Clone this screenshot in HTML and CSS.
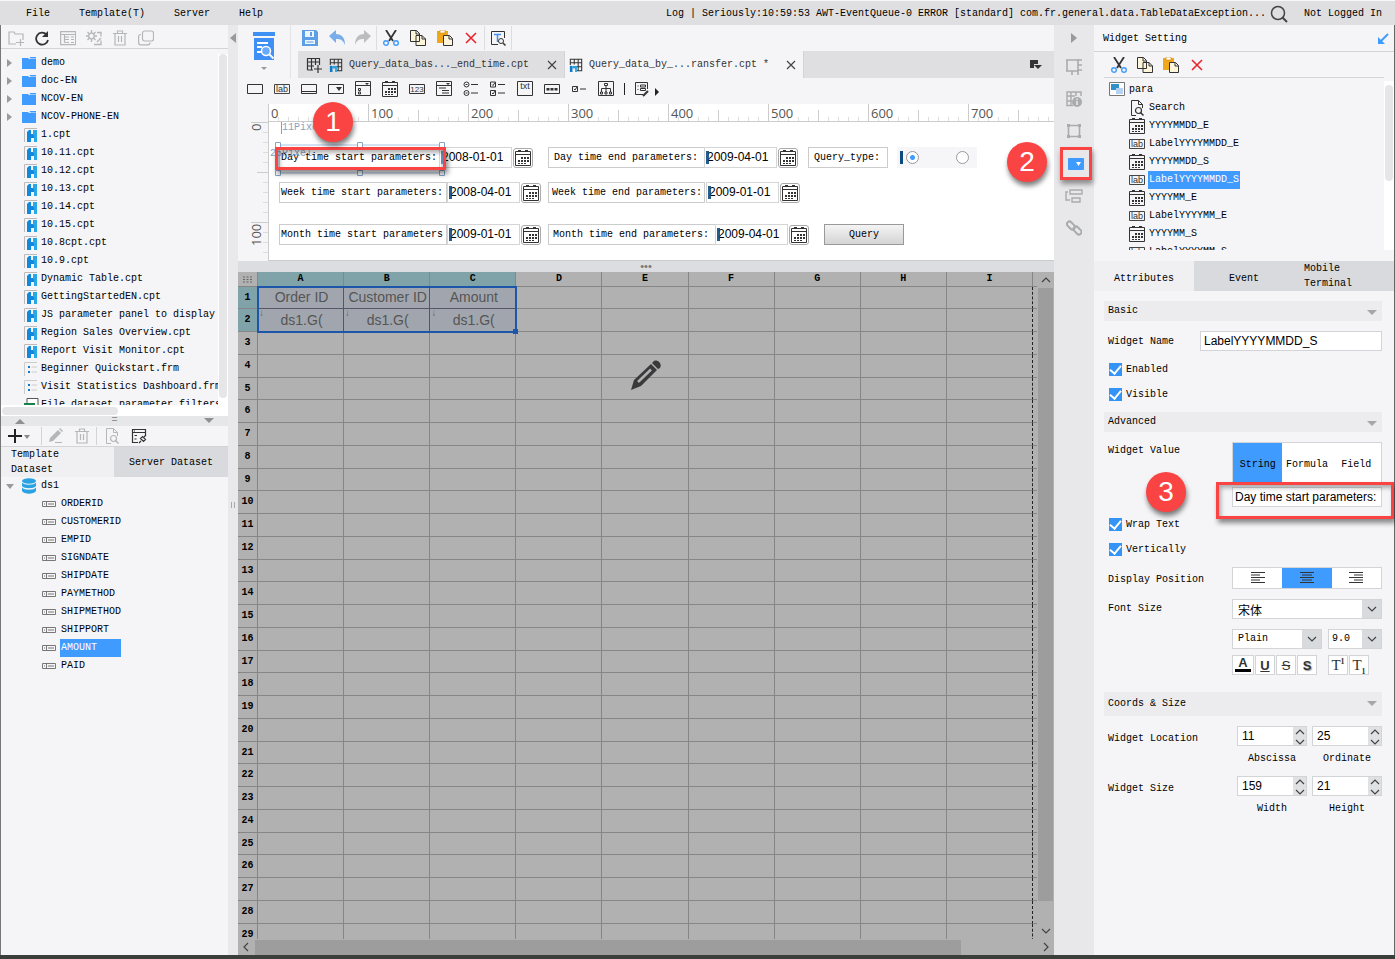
FILE: index.html
```html
<!DOCTYPE html>
<html lang="en">
<head>
<meta charset="utf-8">
<title>Report Designer</title>
<link rel="stylesheet" href="styles.css">
</head>
<body>
<svg class="sprite" aria-hidden="true">
  <symbol id="calendar" viewBox="0 0 16 16"><path d="M.5 1.5h15v14H.5zM.5 4.500h15" fill="none" stroke="#333"/><path d="M3 0h3v2H3zM10 0h3v2h-3z" fill="#333"/><path d="M6 7h2v2H6zM9 7h2v2H9zM12 7h2v2h-2zM3 10h2v2H3zM6 10h2v2H6zM9 10h2v2H9zM12 10h2v2h-2zM3 13h2v1H3zM6 13h2v1H6zM9 13h2v1H9z" fill="#333"/></symbol>
  <symbol id="label" viewBox="0 0 16 16"><path d="M.5 3.500h15v9H.5z" fill="none" stroke="#444"/><text x="8" y="11" font-size="9" text-anchor="middle" font-family="Liberation Sans" fill="#333">lab</text></symbol>
  <symbol id="cut" viewBox="0 0 16 16"><path d="M3 0l7 11M13 0L6 11" stroke="#333" stroke-width="1.800" fill="none"/><circle cx="3" cy="13" r="2.300" fill="none" stroke="#3f9bfd" stroke-width="1.400"/><circle cx="13" cy="13" r="2.300" fill="none" stroke="#3f9bfd" stroke-width="1.400"/></symbol>
  <symbol id="copy" viewBox="0 0 16 16"><path d="M.5.5h6l3 3v8h-9zM6 .5v3.500h3.500M6 5.500h6l3.500 3.500v6.500H6zM12 5.500v3.500h3.500" fill="#fdf6da" stroke="#333"/></symbol>
  <symbol id="paste" viewBox="0 0 16 16"><path d="M0 1h11v12H0z" fill="#f0a81a"/><path d="M3 0h5v3H3z" fill="#fff" stroke="#c98200" stroke-width=".6"/><path d="M6.500 5.500h6l3 3v7h-9zM12 5.500v3.500h3.500" fill="#fdf6da" stroke="#333"/></symbol>
  <symbol id="cross" viewBox="0 0 16 16"><path d="M3 3l10 10M13 3L3 13" stroke="#e8252b" stroke-width="1.600"/></symbol>
  <symbol id="close" viewBox="0 0 16 16"><path d="M4 4l8 8M12 4l-8 8" stroke="#444" stroke-width="1.200"/></symbol>
  <symbol id="folder" viewBox="0 0 16 14"><path d="M1 2h6l1 1h7v10H1z" fill="#3f9bfd"/><path d="M8.500 1H15v1.500H9.500z" fill="#3f9bfd"/></symbol>
  <symbol id="cpt" viewBox="0 0 14 16"><path d="M.5 15V1.500H13" fill="none" stroke="#bbb"/><path d="M3 5l2-2h8v12h-3v-4H7v4H3z" fill="#1288dd"/><path d="M9 3h4v12h-3V8H9z" fill="#28a9e6"/><path d="M7 3h2v4H7z" fill="#f5f5f7"/></symbol>
  <symbol id="frm" viewBox="0 0 14 16"><path d="M.5 15V1.500H13" fill="none" stroke="#ccc"/><path d="M4 5h2v2H4zM4 10h2v2H4z" fill="#1278c8"/><path d="M7.500 6H13M7.500 11H13" stroke="#ccc"/></symbol>
  <symbol id="xls" viewBox="0 0 16 16"><path d="M4 6V1.500h11V15" fill="#fff" stroke="#555"/><path d="M1 6h11v10H1z" fill="#15824b"/><path d="M4 9l5 6M9 9l-5 6" stroke="#fff" stroke-width="1.500"/></symbol>
  <symbol id="field" viewBox="0 0 16 8"><path d="M1.500 1.500h13v5h-13zM5.500 1.500v5M7 4h6M3 4h1" fill="none" stroke="#777"/></symbol>
  <symbol id="db" viewBox="0 0 16 16"><ellipse cx="8" cy="3" rx="7" ry="2.800" fill="#2ba3e3"/><path d="M1 4.500c2 3 12 3 14 0v3.500c-2 3-12 3-14 0zM1 9.500c2 3 12 3 14 0v3.500c-2 3.500-12 3.500-14 0z" fill="#2ba3e3"/></symbol>
  <symbol id="trash" viewBox="0 0 16 16"><path d="M1 3.500h14M5.500 3V1h5v2M3 3.500V15h10V3.500M6.500 6v6M9.500 6v6" fill="none" stroke="#b5b6b9" stroke-width="1.200"/></symbol>
  <symbol id="docfind" viewBox="0 0 16 16"><path d="M7 15.500H2.500V.5h7l4 4V8M9.500.5v4h4" fill="none" stroke="currentColor"/><circle cx="9.500" cy="10.500" r="3" fill="none" stroke="currentColor" stroke-width="1.200"/><path d="M11.500 12.500l3 3" stroke="currentColor" stroke-width="1.500"/></symbol>
  <symbol id="report" viewBox="0 0 16 16"><path d="M1.500 8V1.500h13v13H9M1.500 5.500h13M6 1.500v6M10.500 1.500v13M8 10h6" fill="none" stroke="#333" stroke-width="1.200"/><path d="M1 9h3v7H1z" fill="#1278c8"/><path d="M4 9h5v7H7v-4H4z" fill="#28a0e0"/></symbol>
  <symbol id="chevron" viewBox="0 0 10 10"><path d="M1 3l4 4 4-4" fill="none" stroke="#444" stroke-width="1.200"/></symbol>
  <symbol id="caret" viewBox="0 0 10 6"><path d="M0 0h10L5 5z" fill="currentColor"/></symbol>
</svg>

<header class="menubar">
  <nav class="menus"><button>File</button><button>Template(T)</button><button>Server</button><button>Help</button></nav>
  <p class="log">Log | Seriously:10:59:53 AWT-EventQueue-0 ERROR [standard] com.fr.general.data.TableDataException...</p>
  <button class="icon-btn" aria-label="Search"><svg width="18" height="18" viewBox="0 0 18 18"><circle cx="8" cy="8" r="6.500" fill="none" stroke="#444" stroke-width="1.500"/><path d="M12.500 12.500l4.500 4.500" stroke="#444" stroke-width="2"/></svg></button>
  <button class="login">Not Logged In</button>
</header>

<div class="app">
  <aside class="left">
    <div class="bar file-bar">
      <button class="tool" aria-label="New folder"><svg width="16" height="16" viewBox="0 0 16 16" fill="none" stroke="#b5b6b9" stroke-width="1.200"><path d="M8 14H1V2h5l1 2h8v6M8 12.500h8M12.500 9v7"/></svg></button>
      <button class="tool" aria-label="Refresh"><svg width="16" height="16" viewBox="0 0 16 16"><path d="M12.500 4.500A6 6 0 1 0 14 10" fill="none" stroke="#333" stroke-width="1.800"/><path d="M14 1v6H8z" fill="#333"/></svg></button>
      <button class="tool" aria-label="Show path"><svg width="16" height="16" viewBox="0 0 16 16" fill="none" stroke="#b5b6b9" stroke-width="1.200"><path d="M.6 1.600h15v13H.6zM.6 4.500h15M4.500 4.500v8M4.500 7H9M4.500 9.500H9M4.500 12.500H9M11 7h3M11 9.500h3M11 12.500h3"/></svg></button>
      <button class="tool" aria-label="Settings"><svg width="16" height="16" viewBox="0 0 16 16" fill="none" stroke="#b5b6b9" stroke-width="1.300"><circle cx="5.500" cy="6" r="2.800"/><path d="M5.500 0v3M5.500 9v3M0 6h2.500M8.500 6H11M1.500 2l2 2M9.500 2l-2 2M1.500 10l2-2M9.500 10l-2-2M11 2.500h4v4M8 14.500h7v-4M11 12l4-4"/></svg></button>
      <button class="tool" aria-label="Delete"><svg width="16" height="16"><use href="#trash"/></svg></button>
      <button class="tool" aria-label="Duplicate"><svg width="16" height="16" viewBox="0 0 16 16" fill="none" stroke="#b5b6b9" stroke-width="1.200"><rect x="4.500" y="1" width="11" height="10" rx="2"/><path d="M3 4.500c-1.500 0-2.400.5-2.400 2v6c0 1.500.5 2.400 2 2.400h7c1.500 0 2.400-.8 2.400-2.400"/></svg></button>
    </div>
    <div class="tree-box files">
      <ul class="tree">
        <li class="dir"><svg><use href="#folder"/></svg>demo</li>
        <li class="dir"><svg><use href="#folder"/></svg>doc-EN</li>
        <li class="dir"><svg><use href="#folder"/></svg>NCOV-EN</li>
        <li class="dir"><svg><use href="#folder"/></svg>NCOV-PHONE-EN</li>
        <li><svg><use href="#cpt"/></svg>1.cpt</li>
        <li><svg><use href="#cpt"/></svg>10.11.cpt</li>
        <li><svg><use href="#cpt"/></svg>10.12.cpt</li>
        <li><svg><use href="#cpt"/></svg>10.13.cpt</li>
        <li><svg><use href="#cpt"/></svg>10.14.cpt</li>
        <li><svg><use href="#cpt"/></svg>10.15.cpt</li>
        <li><svg><use href="#cpt"/></svg>10.8cpt.cpt</li>
        <li><svg><use href="#cpt"/></svg>10.9.cpt</li>
        <li><svg><use href="#cpt"/></svg>Dynamic Table.cpt</li>
        <li><svg><use href="#cpt"/></svg>GettingStartedEN.cpt</li>
        <li><svg><use href="#cpt"/></svg>JS parameter panel to display</li>
        <li><svg><use href="#cpt"/></svg>Region Sales Overview.cpt</li>
        <li><svg><use href="#cpt"/></svg>Report Visit Monitor.cpt</li>
        <li><svg><use href="#frm"/></svg>Beginner Quickstart.frm</li>
        <li><svg><use href="#frm"/></svg>Visit Statistics Dashboard.frm</li>
        <li><svg><use href="#xls"/></svg>File dataset parameter filters</li>
      </ul>
      <div class="vscroll"><i></i></div>
    </div>
    <div class="hscroll"><i></i></div>
    <div class="splitter"><svg class="up" width="10" height="6"><use href="#caret"/></svg><span>=</span><svg width="10" height="6"><use href="#caret"/></svg></div>
    <div class="bar data-bar">
      <button class="tool add" aria-label="Add"><svg width="22" height="14" viewBox="0 0 22 14"><path d="M7 0v14M0 7h14" stroke="#222" stroke-width="2"/><path d="M16 6h6l-3 4z" fill="#888"/></svg></button>
      <button class="tool sep-l" aria-label="Edit"><svg width="16" height="16" viewBox="0 0 16 16"><path d="M1 14l1-4 8-8 3 3-8 8zM11 1l1-1 3 3-1 1z" fill="#b5b6b9"/><path d="M7 14.500h7" stroke="#b5b6b9"/></svg></button>
      <button class="tool" aria-label="Delete dataset"><svg width="16" height="16"><use href="#trash"/></svg></button>
      <button class="tool sep-l pale" aria-label="Preview"><svg width="16" height="16"><use href="#docfind"/></svg></button>
      <button class="tool" aria-label="Connection"><svg width="16" height="16" viewBox="0 0 16 16" fill="none" stroke="#333" stroke-width="1.200"><path d="M7 14.500H1.500v-13h13V7M1.500 4.500h13M3.500 7.500H6M3.500 11h2M3 3h1"/><path d="M8 15l2-2M9.500 10.500l3 3 2-2-3-3zM13 9l2-2"/></svg></button>
    </div>
    <div class="tabs data-tabs"><button class="on">Template<br>Dataset</button><button>Server Dataset</button></div>
    <ul class="tree dataset">
      <li class="dir open"><svg><use href="#db"/></svg>ds1</li>
      <li class="col"><svg><use href="#field"/></svg>ORDERID</li>
      <li class="col"><svg><use href="#field"/></svg>CUSTOMERID</li>
      <li class="col"><svg><use href="#field"/></svg>EMPID</li>
      <li class="col"><svg><use href="#field"/></svg>SIGNDATE</li>
      <li class="col"><svg><use href="#field"/></svg>SHIPDATE</li>
      <li class="col"><svg><use href="#field"/></svg>PAYMETHOD</li>
      <li class="col"><svg><use href="#field"/></svg>SHIPMETHOD</li>
      <li class="col"><svg><use href="#field"/></svg>SHIPPORT</li>
      <li class="col"><svg><use href="#field"/></svg><mark class="wide">AMOUNT</mark></li>
      <li class="col"><svg><use href="#field"/></svg>PAID</li>
    </ul>
  </aside>
  <div class="gutter"><svg width="6" height="10" viewBox="0 0 6 10"><path d="M6 0v10L0 5z" fill="#999"/></svg><span class="grip"></span></div>

  <main class="center">
    <div class="head">
      <button class="preview" aria-label="Preview"><svg width="24" height="42" viewBox="0 0 24 42"><path d="M1 1h22v4H1zM2 7h20v22H2z" fill="#3f8ff5"/><path d="M5 12h11M5 16h5M5 21h5" stroke="#fff" stroke-width="2"/><circle cx="14" cy="20" r="4.500" fill="#6aaafa" stroke="#fff" stroke-width="1.500"/><path d="M17.500 23.500l4 4" stroke="#fff" stroke-width="2"/><path d="M9 36h6l-3 3z" fill="#999"/></svg></button>
      <div class="head-main">
        <div class="main-bar">
          <button class="tool" aria-label="Save"><svg width="18" height="18" viewBox="0 0 18 18"><path d="M1 1h14l2 2v14H1z" fill="#5c9fe6"/><path d="M4 2h9v6H4zM4 11h10v4H4z" fill="#eef4fb"/><path d="M9 3h2v4H9z" fill="#5c9fe6"/><path d="M5.500 13h7" stroke="#5c9fe6"/></svg></button>
          <button class="tool" aria-label="Undo"><svg width="16" height="16" viewBox="0 0 16 16"><path d="M0 6l7-6v4c6 0 9 4 9 11-2-5-4-6-9-6v4z" fill="#77aee9"/></svg></button>
          <button class="tool sep" aria-label="Redo"><svg width="16" height="16" viewBox="0 0 16 16"><path d="M16 6L9 0v4C3 4 0 8 0 15c2-5 4-6 9-6v4z" fill="#bcbdc0"/></svg></button>
          <button class="tool" aria-label="Cut"><svg width="16" height="16"><use href="#cut"/></svg></button>
          <button class="tool" aria-label="Copy"><svg width="16" height="16"><use href="#copy"/></svg></button>
          <button class="tool" aria-label="Paste"><svg width="16" height="16"><use href="#paste"/></svg></button>
          <button class="tool sep" aria-label="Delete"><svg width="16" height="16"><use href="#cross"/></svg></button>
          <button class="tool sep" aria-label="Find"><svg width="16" height="16" viewBox="0 0 16 16"><path d="M8 14.500H1.500v-13h13V8" fill="none" stroke="#333"/><path d="M4 4.500h7M7.500 4.500V12" stroke="#3f8ff5" stroke-width="1.500"/><circle cx="11" cy="11" r="2.500" fill="none" stroke="#333"/><path d="M13 13l2.500 2.500" stroke="#333" stroke-width="1.500"/></svg></button>
        </div>
        <div class="doc-tabs">
          <button class="tool" aria-label="New report"><svg width="16" height="16" viewBox="0 0 16 16" fill="none" stroke="#333" stroke-width="1.200"><path d="M1.500 13V1.500h12V8M1.500 5h12M5.500 1.500V13M9.500 1.500V8M1.500 9H8M1.500 13H7M8 12h8M12 8v8"/></svg></button>
          <div class="doc"><svg width="14" height="14"><use href="#report"/></svg><span>Query_data_bas..._end_time.cpt</span><button aria-label="Close"><svg width="16" height="16"><use href="#close"/></svg></button></div>
          <div class="doc on"><svg width="14" height="14"><use href="#report"/></svg><span>Query_data_by_...ransfer.cpt *</span><button aria-label="Close"><svg width="16" height="16"><use href="#close"/></svg></button></div>
          <button class="tool list" aria-label="Tab list"><svg width="14" height="12" viewBox="0 0 14 12"><path d="M1 1h8v4H5v4H1zM5 6h8l-4 4z" fill="#333"/></svg></button>
        </div>
      </div>
    </div>
    <div class="widget-bar">
      <button class="tool" aria-label="Text"><svg width="16" height="16" viewBox="0 0 16 16"><path d="M.5 3.500h15v9H.5z" fill="none" stroke="#333"/></svg></button>
      <button class="tool" aria-label="Label"><svg width="16" height="16"><use href="#label"/></svg></button>
      <button class="tool" aria-label="Button"><svg width="16" height="16" viewBox="0 0 16 16"><path d="M.5 3.500h15v9H.5zM.5 10.500h15" fill="none" stroke="#333"/></svg></button>
      <button class="tool" aria-label="Combo"><svg width="16" height="16" viewBox="0 0 16 16"><path d="M.5 3.500h15v9H.5z" fill="none" stroke="#333"/><path d="M8 6h6l-3 4z" fill="#333"/></svg></button>
      <button class="tool" aria-label="List"><svg width="16" height="16" viewBox="0 0 16 16"><path d="M.5.5h15v14H.5zM.5 4.500h15M3.500 7.500h2v2h-2zM3.500 11h2v2h-2z" fill="none" stroke="#333"/><path d="M10 2h4l-2 2z" fill="#333"/></svg></button>
      <button class="tool" aria-label="Date"><svg width="16" height="16"><use href="#calendar"/></svg></button>
      <button class="tool" aria-label="Number"><svg width="16" height="16" viewBox="0 0 16 16"><path d="M.5 3.500h15v9H.5z" fill="none" stroke="#333"/><text x="8" y="11" font-size="8" text-anchor="middle" font-family="Liberation Sans" fill="#333">123</text></svg></button>
      <button class="tool" aria-label="Tree combo"><svg width="16" height="16" viewBox="0 0 16 16"><path d="M.5.5h15v14H.5zM.5 4.500h15M3 7h7M6 9.500h7M6 12h7" fill="none" stroke="#333"/><path d="M10 2h4l-2 2z" fill="#333"/></svg></button>
      <button class="tool" aria-label="Radio group"><svg width="16" height="16" viewBox="0 0 16 16" fill="none" stroke="#333"><circle cx="3.500" cy="3.500" r="2.500"/><circle cx="3.500" cy="12" r="2.500"/><path d="M8 3.500h7M8 12h7M2.500 3.500h2M2.500 12h2"/></svg></button>
      <button class="tool" aria-label="Check group"><svg width="16" height="16" viewBox="0 0 16 16" fill="none" stroke="#333"><path d="M.5 1h5v5h-5zM.5 9.500h5v5h-5zM2 3.500l1 1 2-3M2 12l1 1 2-3M8 3.500h7M8 12h7"/></svg></button>
      <button class="tool" aria-label="Text area"><svg width="16" height="16" viewBox="0 0 16 16"><path d="M.5.5h15v14H.5z" fill="none" stroke="#333"/><text x="8" y="8" font-size="9" text-anchor="middle" font-family="Liberation Sans" fill="#333">txt</text></svg></button>
      <button class="tool" aria-label="Password"><svg width="16" height="16" viewBox="0 0 16 16"><path d="M.5 3.500h15v9H.5z" fill="none" stroke="#333"/><path d="M2.500 7h3v2.500h-3zM6.500 7h3v2.500h-3zM10.500 7h3v2.500h-3z" fill="#333"/></svg></button>
      <button class="tool" aria-label="Check box"><svg width="16" height="16" viewBox="0 0 16 16"><path d="M1.500 5.500h5v5h-5zM3 8l1 1 2-3M9 8h6" fill="none" stroke="#333"/></svg></button>
      <button class="tool" aria-label="View tree"><svg width="16" height="16" viewBox="0 0 16 16" fill="none" stroke="#333"><path d="M.5.5h15v14H.5zM6.500 2.500h3v2h-3zM8 4.500V11M3.500 11V7.500h9V11M2.500 11h2v2h-2zM7 11h2v2H7zM11.500 11h2v2h-2z"/></svg></button>
      <span class="rule"></span>
      <button class="tool" aria-label="Predefined"><svg width="16" height="16" viewBox="0 0 16 16" fill="none" stroke="#333"><path d="M9 13.500H1.500v-12h12V8M3.500 5h1M3.500 8.500h1M6.500 4h5v2h-5zM6.500 7.500h5v2h-5z"/><path d="M9 15l5-5" stroke-width="2"/></svg></button>
      <svg class="more" width="5" height="8" viewBox="0 0 5 8"><path d="M0 0v8l4-4z" fill="#222"/></svg>
    </div>
    <div class="designer">
      <div class="corner"></div>
      <div class="ruler-x"><span>0</span><span>100</span><span>200</span><span>300</span><span>400</span><span>500</span><span>600</span><span>700</span></div>
      <div class="ruler-y"><span>0</span><span>100</span></div>
      <div class="canvas">
        <span class="hint h-x">11Pixel</span><span class="hint h-y">25Pixel</span>
        <div class="w day l1"><label>Day time start parameters:</label></div>
        <div class="w day d1"><input aria-label="Day start" value="2008-01-01"><button aria-label="Pick"><svg width="16" height="16"><use href="#calendar"/></svg></button></div>
        <div class="w day l2"><label>Day time end parameters:</label></div>
        <div class="w day d2"><input aria-label="Day end" value="2009-04-01"><button aria-label="Pick"><svg width="16" height="16"><use href="#calendar"/></svg></button></div>
        <div class="w day l3"><label>Query_type:</label></div>
        <div class="w day radios"><i></i><input type="radio" name="q" aria-label="Type one" checked><input type="radio" name="q" aria-label="Type two"></div>
        <div class="w week l1"><label>Week time start parameters:</label></div>
        <div class="w week d3"><input aria-label="Week start" value="2008-04-01"><button aria-label="Pick"><svg width="16" height="16"><use href="#calendar"/></svg></button></div>
        <div class="w week l2"><label>Week time end parameters:</label></div>
        <div class="w week d4"><input aria-label="Week end" value="2009-01-01"><button aria-label="Pick"><svg width="16" height="16"><use href="#calendar"/></svg></button></div>
        <div class="w month l1"><label>Month time start parameters</label></div>
        <div class="w month d3"><input aria-label="Month start" value="2009-01-01"><button aria-label="Pick"><svg width="16" height="16"><use href="#calendar"/></svg></button></div>
        <div class="w month l4"><label>Month time end parameters:</label></div>
        <div class="w month d5"><input aria-label="Month end" value="2009-04-01"><button aria-label="Pick"><svg width="16" height="16"><use href="#calendar"/></svg></button></div>
        <button class="w month query">Query</button>
        <svg class="handles" width="170" height="34" viewBox="0 0 170 34"><path d="M3 3h164v28H3z" fill="none" stroke="#a9c4e4"/><g fill="#fff" stroke="#86a5c8"><path d="M.5.5h5v5h-5zM82.500.5h5v5h-5zM164.500.5h5v5h-5zM.5 28.500h5v5h-5zM82.500 28.500h5v5h-5zM164.500 28.500h5v5h-5z"/></g></svg>
        <div class="redbox red1"></div>
        <div class="badge b1">1</div>
        <div class="badge b2">2</div>
      </div>
    </div>
    <div class="dots">•••</div>
    <div class="sheet-wrap">
      <div class="sheet">
        <table>
          <colgroup><col class="c-num"><col span="9"><col class="c-end"></colgroup>
          <thead><tr><th><svg width="9" height="7" viewBox="0 0 9 7"><path d="M0 1h2M3.500 1h2M7 1h2M0 3.500h2M3.500 3.500h2M7 3.500h2M0 6h2M3.500 6h2M7 6h2" stroke="#666"/></svg></th><th class="hl">A</th><th class="hl">B</th><th class="hl">C</th><th>D</th><th>E</th><th>F</th><th>G</th><th>H</th><th>I</th><th></th></tr></thead>
          <tbody id="rows">
            <tr><th class="hl">1</th><td class="sel">Order ID</td><td class="sel">Customer ID</td><td class="sel">Amount</td><td></td><td></td><td></td><td></td><td></td><td></td><td></td></tr>
            <tr><th class="hl">2</th><td class="sel ds">ds1.G(</td><td class="sel ds">ds1.G(</td><td class="sel ds">ds1.G(</td><td></td><td></td><td></td><td></td><td></td><td></td><td></td></tr>
          </tbody>
        </table>
        <div class="range"></div>
        <svg class="pencil" width="32" height="32" viewBox="0 0 32 32"><path d="M1 31l3-10L21 5l6 6L11 27zM23 3c3-4 10 1 7 6l-2 1-6-6z" fill="#3a3a3c"/><path d="M8 23L21 10.500" stroke="#b1b1b1" stroke-width="2.500"/></svg>
      </div>
      <div class="sheet-v"><svg class="up" width="10" height="10"><use href="#chevron"/></svg><i></i><svg width="10" height="10"><use href="#chevron"/></svg></div>
      <div class="sheet-h"><svg class="lt" width="10" height="10"><use href="#chevron"/></svg><i></i><svg class="rt" width="10" height="10"><use href="#chevron"/></svg></div>
    </div>
  </main>

  <nav class="strip">
    <button aria-label="Collapse"><svg width="6" height="10" viewBox="0 0 6 10"><path d="M0 0v10l6-5z" fill="#999"/></svg></button>
    <button aria-label="Cell"><svg width="16" height="16" viewBox="0 0 16 16" fill="none" stroke="#aaabae" stroke-width="1.600"><path d="M0 1h16M1 1v11M0 12h12M12 0v16M6 12v4M12 6h4M12 11h4"/></svg></button>
    <button aria-label="Cell attributes"><svg width="16" height="16" viewBox="0 0 16 16" fill="none" stroke="#aaabae" stroke-width="1.400"><path d="M7 14.500H1V1h14v4M1 5h8M1 10h5M5 1v13M10 1v4"/><circle cx="11" cy="11" r="5" fill="#aaabae" stroke="none"/><path d="M11 10v4M11 7.500v1.500" stroke="#eee"/></svg></button>
    <button aria-label="Floating"><svg width="16" height="16" viewBox="0 0 16 16" fill="none" stroke="#aaabae" stroke-width="1.600"><path d="M2.500 2.500h11v11h-11z"/><path d="M1 1h3v3H1zM12 1h3v3h-3zM1 12h3v3H1zM12 12h3v3h-3z" fill="#aaabae" stroke="none"/></svg></button>
    <button class="red2" aria-label="Widget"><svg width="16" height="12" viewBox="0 0 16 12"><rect width="16" height="12" rx="1" fill="#3f9bfd"/><path d="M8 4h5l-2.500 4z" fill="#fff"/></svg></button>
    <button aria-label="Conditional"><svg width="18" height="14" viewBox="0 0 18 14" fill="none" stroke="#aaabae" stroke-width="1.400"><path d="M5 1h12v4H5zM7 9h8v4H7zM3 3H1v8h4"/></svg></button>
    <button aria-label="Hyperlink"><svg width="16" height="16" viewBox="0 0 16 16" fill="none" stroke="#aaabae" stroke-width="2"><rect x="-1" y="3" width="9" height="5" rx="2.500" transform="rotate(45 3.500 5.500) translate(1 -1)"/><rect x="7" y="8" width="9" height="5" rx="2.500" transform="rotate(45 11.500 10.500)"/></svg></button>
  </nav>

  <aside class="right">
    <div class="title"><span>Widget Setting</span><svg width="12" height="12" viewBox="0 0 12 12"><path d="M11 1L3 9" stroke="#3f9bfd" stroke-width="2"/><path d="M1 4v7h7z" fill="#3f9bfd"/></svg></div>
    <div class="bar prop-bar">
      <button class="tool" aria-label="Cut widget"><svg width="16" height="16"><use href="#cut"/></svg></button>
      <button class="tool" aria-label="Copy widget"><svg width="16" height="16"><use href="#copy"/></svg></button>
      <button class="tool" aria-label="Paste widget"><svg width="16" height="16"><use href="#paste"/></svg></button>
      <button class="tool" aria-label="Delete widget"><svg width="16" height="16"><use href="#cross"/></svg></button>
    </div>
    <div class="tree-box widgets">
      <ul class="tree">
        <li class="root"><svg viewBox="0 0 16 16"><path d="M.5.5h15v13H.5z" fill="#fff" stroke="#777"/><path d="M2 2h8v6H2z" fill="#3090c8"/><path d="M7 6h7v6H7z" fill="#b5d2f5"/></svg>para</li>
        <li><svg><use href="#docfind"/></svg>Search</li>
        <li><svg><use href="#calendar"/></svg>YYYYMMDD_E</li>
        <li><svg><use href="#label"/></svg>LabelYYYYMMDD_E</li>
        <li><svg><use href="#calendar"/></svg>YYYYMMDD_S</li>
        <li><svg><use href="#label"/></svg><mark>LabelYYYYMMDD_S</mark></li>
        <li><svg><use href="#calendar"/></svg>YYYYMM_E</li>
        <li><svg><use href="#label"/></svg>LabelYYYYMM_E</li>
        <li><svg><use href="#calendar"/></svg>YYYYMM_S</li>
        <li><svg><use href="#label"/></svg>LabelYYYYMM_S</li>
      </ul>
      <div class="vscroll"><i></i></div>
    </div>
    <div class="tabs prop-tabs"><button class="on">Attributes</button><button>Event</button><button class="last"><span>Mobile<br>Terminal</span></button></div>
    <form class="props">
      <h3>Basic<svg width="10" height="6"><use href="#caret"/></svg></h3>
      <div class="row name"><label for="wn">Widget Name</label><input class="txt" id="wn" value="LabelYYYYMMDD_S"></div>
      <label class="check"><input type="checkbox" checked>Enabled</label>
      <label class="check"><input type="checkbox" checked>Visible</label>
      <h3>Advanced<svg width="10" height="6"><use href="#caret"/></svg></h3>
      <div class="row value">
        <label for="wv">Widget Value</label>
        <div class="stack">
          <div class="seg tall"><button type="button" class="on">String</button><button type="button">Formula</button><button type="button">Field</button></div>
          <input class="txt" id="wv" value="Day time start parameters:">
          <div class="redbox red3"></div>
        </div>
        <div class="badge b3">3</div>
      </div>
      <label class="check"><input type="checkbox" checked>Wrap Text</label>
      <label class="check"><input type="checkbox" checked>Vertically</label>
      <div class="row pos"><span>Display Position</span>
        <div class="seg">
          <button type="button" aria-label="Left"><svg width="16" height="12" viewBox="0 0 16 12"><path d="M1 .5h14M1 3h9M1 5.500h14M1 8h9M1 10.500h14" stroke="#333"/></svg></button>
          <button type="button" class="on" aria-label="Center"><svg width="16" height="12" viewBox="0 0 16 12"><path d="M1 .5h14M3 3h10M1 5.500h14M3 8h10M1 10.500h14" stroke="#333"/></svg></button>
          <button type="button" aria-label="Right"><svg width="16" height="12" viewBox="0 0 16 12"><path d="M1 .5h14M6 3h9M1 5.500h14M6 8h9M1 10.500h14" stroke="#333"/></svg></button>
        </div>
      </div>
      <div class="row font"><label for="ff">Font Size</label>
        <div class="stack">
          <div class="pick cjk"><select id="ff"><option>宋体</option></select><svg width="10" height="10"><use href="#chevron"/></svg></div>
          <div class="pair"><div class="pick style"><select aria-label="Style"><option>Plain</option></select><svg width="10" height="10"><use href="#chevron"/></svg></div><div class="pick size"><select aria-label="Size"><option>9.0</option></select><svg width="10" height="10"><use href="#chevron"/></svg></div></div>
          <div class="fmt"><button type="button" class="color">A</button><button type="button"><u>U</u></button><button type="button" class="thin"><s>S</s></button><button type="button" class="shade">S</button><button type="button" class="serif gap">T<sup>1</sup></button><button type="button" class="serif">T<sub>1</sub></button></div>
        </div>
      </div>
      <h3 class="coords">Coords &amp; Size<svg width="10" height="6"><use href="#caret"/></svg></h3>
      <div class="row num"><span>Widget Location</span>
        <div class="spins">
          <label><span class="spin"><input value="11"><span class="arrows"><svg class="up" width="10" height="10"><use href="#chevron"/></svg><svg width="10" height="10"><use href="#chevron"/></svg></span></span>Abscissa</label>
          <label><span class="spin"><input value="25"><span class="arrows"><svg class="up" width="10" height="10"><use href="#chevron"/></svg><svg width="10" height="10"><use href="#chevron"/></svg></span></span>Ordinate</label>
        </div>
      </div>
      <div class="row num"><span>Widget Size</span>
        <div class="spins">
          <label><span class="spin"><input value="159"><span class="arrows"><svg class="up" width="10" height="10"><use href="#chevron"/></svg><svg width="10" height="10"><use href="#chevron"/></svg></span></span>Width</label>
          <label><span class="spin"><input value="21"><span class="arrows"><svg class="up" width="10" height="10"><use href="#chevron"/></svg><svg width="10" height="10"><use href="#chevron"/></svg></span></span>Height</label>
        </div>
      </div>
    </form>
  </aside>
</div>
<footer class="edge"></footer>
<script src="sheet.js"></script>
</body>
</html>
```

FILE: styles.css
```css
:root {
  --bg: #f5f5f7;
  --tab: #d9dadd;
  --menu: #dfdfe1;
  --blue: #3f9bfd;
  --line: #d3d4d7;
  --red: #fa4343;
  --mono: "Liberation Mono", "Noto Sans CJK SC", monospace;
  --sans: "Liberation Sans", Arial, sans-serif;
}
* { box-sizing: border-box; }
body {
  margin: 0;
  height: 100vh;
  display: flex;
  flex-direction: column;
  overflow: hidden;
  background: var(--bg);
  color: #000;
  font: 10px/14px var(--mono);
}
button {
  margin: 0;
  padding: 0;
  border: 0;
  background: none;
  font: inherit;
  color: inherit;
}
input, select { font: inherit; color: inherit; margin: 0; min-width: 0; }
svg { flex: none; display: block; }
.sprite { position: absolute; width: 0; height: 0; }
.up { transform: rotate(180deg); }
.lt { transform: rotate(90deg); }
.rt { transform: rotate(-90deg); }

/* menu bar */
.menubar {
  height: 25px;
  flex: none;
  display: flex;
  align-items: center;
  background: var(--menu);
  border-top: 1px solid #f8f8f8;
  padding: 1px 13px 0 26px;
}
.menus { display: flex; gap: 29px; }
.log { margin: 0 4px 0 auto; white-space: nowrap; }
.login { margin-left: 16px; }

.app { flex: 1; min-height: 0; display: flex; border-left: 1px solid #777; border-right: 1px solid #666; }
.edge { height: 4px; flex: none; background: #3b3f3c; }

.bar { display: flex; align-items: center; flex: none; border-bottom: 1px solid var(--line); }
.tool { width: 26px; height: 24px; display: flex; align-items: center; justify-content: center; flex: none; }

/* left side */
.left { width: 227px; flex: none; display: flex; flex-direction: column; }
.file-bar { height: 24px; padding-top: 2px; padding-left: 2px; }
.tree-box { display: flex; overflow: hidden; flex: none; }
.files { height: 356px; padding-top: 5px; }
.tree { list-style: none; margin: 0; padding: 0; white-space: nowrap; flex: 1; min-width: 0; overflow: hidden; }
.tree li { height: 18px; display: flex; align-items: center; padding-left: 22px; }
.tree li svg { width: 16px; height: 16px; margin-right: 2px; }
.tree .dir { padding-left: 6px; }
.tree .dir svg { margin-right: 4px; }
.tree .dir::before {
  content: "";
  border: 4px solid transparent;
  border-left: 5px solid #9a9a9d;
  border-right: 0;
  margin-right: 9px;
}
.tree .dir.open::before { border: 4px solid transparent; border-top: 5px solid #9a9a9d; border-bottom: 0; margin: 0 7px 0 -1px; }
.tree .col { padding-left: 40px; }
.tree .col svg { width: 16px; height: 8px; margin-right: 4px; }
mark { background: var(--blue); color: #fff; line-height: 18px; margin-left: -1px; padding: 0 1px; }
.wide { width: 61px; }
.vscroll { width: 10px; background: #fff; flex: none; }
.vscroll i { display: block; height: 344px; margin: 0 1px; border-radius: 4px; background: #e6e6e8; }
.hscroll { height: 11px; flex: none; background: #fff; padding: 2px 1px; }
.hscroll i { display: block; width: 116px; height: 8px; border-radius: 4px; background: #e6e6e8; }
.splitter { height: 10px; flex: none; display: flex; align-items: center; justify-content: space-between; padding: 0 14px; background: #e6e7e9; color: #8f9093; }
.data-bar { height: 21px; padding-left: 3px; }
.data-bar .add { width: 36px; height: 20px; padding-right: 6px; }
.data-bar .tool { height: 18px; }
.sep-l { border-left: 1px solid var(--line); margin-left: 1px; }
.data-bar .sep-l { width: 28px; }
.pale { color: #b5b6b9; }
.data-bar .pale { width: 30px; }
.tabs { display: grid; grid-template-rows: 30px; flex: none; line-height: 15px; }
.tabs button { background: var(--tab); display: flex; align-items: center; justify-content: center; }
.tabs button.on { background: #f0f0f3; }
.data-tabs { grid-template-columns: 113px 1fr; }
.data-tabs button.on { text-align: left; justify-content: flex-start; padding-left: 10px; }
.dataset { flex: 1; }

.gutter { width: 10px; flex: none; background: #e9e9eb; position: relative; padding: 8px 0 0 2px; }
.grip { position: absolute; top: 477px; left: 3px; width: 4px; height: 6px; border: solid #aaa; border-width: 0 1px; }

/* center */
.center { flex: 1; min-width: 0; display: flex; flex-direction: column; }
.head { display: flex; height: 53px; flex: none; }
.preview { width: 53px; display: flex; align-items: center; justify-content: center; border-right: 1px solid #e2e3e5; margin-right: 7px; }
.head-main { flex: 1; min-width: 0; display: flex; flex-direction: column; }
.main-bar { display: flex; height: 26px; align-items: center; margin-left: -2px; }
.main-bar .tool, .widget-bar .tool { width: 27px; }
.main-bar .sep { border-right: 1px solid #dcdde0; }
.doc-tabs { flex: 1; display: flex; align-items: stretch; background: var(--menu); }
.doc-tabs .tool { height: 27px; width: 31px; }
.doc { display: flex; align-items: center; width: 236px; gap: 6px; border-right: 1px solid var(--line); color: #333; }
.doc span { flex: 1; white-space: nowrap; padding-top: 1px; }
.doc button { padding: 0 4px; }
.doc.on { width: 239px; background: var(--bg); padding-left: 4px; }
.doc-tabs .list { margin-left: auto; width: 36px; }
.widget-bar { height: 26px; flex: none; display: flex; align-items: center; padding: 0 0 4px 3px; }
.rule { width: 1px; height: 12px; background: #222; margin: 0 3px 0 5px; }
.more { margin-top: 6px; }

.designer { display: grid; grid-template: 18px 139px / 30px 1fr; flex: none; position: relative; }
.ruler-x, .ruler-y { font: 13px/16px "Open Sans", sans-serif; color: #555; background-color: #fff; overflow: hidden; display: flex; }
.ruler-x {
  border-bottom: 1px solid #ccc;
  background-image: linear-gradient(90deg, #ccc 1px, transparent 1px), linear-gradient(90deg, #ccc 1px, transparent 1px), linear-gradient(90deg, #ddd 1px, transparent 1px);
  background-size: 100px 17px, 50px 11px, 10px 4px;
  background-position: 0 100%;
  background-repeat: repeat-x;
}
.ruler-x span { width: 100px; flex: none; padding: 1px 0 0 3px; }
.ruler-y {
  flex-direction: column;
  background-color: var(--bg);
  background-image: linear-gradient(#ccc 1px, transparent 1px), linear-gradient(#ccc 1px, transparent 1px), linear-gradient(#ddd 1px, transparent 1px);
  background-size: 17px 100px, 11px 50px, 5px 10px;
  background-position: 100% 0;
  background-repeat: repeat-y;
}
.ruler-y span { height: 100px; flex: none; writing-mode: vertical-rl; transform: rotate(180deg); text-align: right; padding-bottom: 2px; width: 18px; margin-left: 10px; }
.canvas { position: relative; background: #fff; border-left: 1px solid #ccc; border-bottom: 1px solid #ccc; }

/* widgets on the form canvas */
.w { position: absolute; height: 21px; display: flex; align-items: center; }
.w label { flex: 1; height: 100%; border: 1px solid #ccc; padding-left: 1px; line-height: 20px; white-space: nowrap; overflow: hidden; }
.w > input:not([type]) { width: 73px; height: 100%; border: 1px solid #d5d5d5; background: #fff; font: 12px var(--sans); padding: 0 0 2px 2px; }
.w:has(> input:not([type]))::before { content: ""; position: absolute; left: 2px; top: 4px; width: 3px; height: 13px; background: #0c4a80; opacity: .9; }
.w > button { width: 20px; height: 20px; border: 1px solid #aaa; border-radius: 3px; display: grid; place-items: center; margin-left: 1px; }
.day { top: 25px; }
.week { top: 60px; }
.month { top: 102px; }
.l1 { left: 10px; width: 168px; }
.l2 { left: 279px; width: 157px; }
.l2 label, .l3 label { padding-left: 5px; }
.week.l2 label { padding-left: 3px; }
.l3 { left: 539px; width: 80px; }
.l4 { left: 279px; width: 168px; }
.l4 label { padding-left: 4px; }
.d1 { left: 170px; }
.d2 { left: 435px; }
.d3 { left: 178px; }
.d4 { left: 437px; }
.d5 { left: 446px; }
.radios { left: 628px; width: 80px; background: #f6f6f8; padding: 0 8px 0 3px; }
.radios i { width: 3px; height: 13px; background: #0c4a80; }
.radios input { appearance: none; width: 13px; height: 13px; border: 1px solid #999; border-radius: 50%; background: #fff; margin-left: 3px; }
.radios input:last-child { margin-left: auto; }
.radios input:checked { background: radial-gradient(circle, var(--blue) 0 2px, #fff 3px); }
.w.query { left: 555px; width: 80px; height: 21px; border: 1px solid #999; border-radius: 0; margin: 0; background: linear-gradient(#f4f4f4, #d4d4d4); justify-content: center; }
.hint { position: absolute; color: #88a3bf; line-height: 12px; }
.h-x { left: 12px; top: 0; border-left: 1px solid #88a3bf; }
.h-y { left: 1px; top: 26px; z-index: 1; }
.handles { position: absolute; left: 6px; top: 20px; }
.redbox { position: absolute; border: 3px solid var(--red); box-shadow: 2px 4px 5px rgba(0, 0, 0, .45), inset 2px 3px 4px rgba(0, 0, 0, .3); pointer-events: none; }
.red1 { left: 6px; top: 25px; width: 171px; height: 23px; z-index: 2; }
.badge { position: absolute; z-index: 3; width: 40px; height: 40px; border-radius: 50%; background: var(--red); color: #fff; font: 28px/40px var(--sans); text-align: center; box-shadow: 1px 4px 5px rgba(0, 0, 0, .5); }
.b1 { left: 44px; top: -20px; }
.b2 { right: 7px; top: 20px; }

.dots { height: 11px; flex: none; background: #dcdde0; text-align: center; font: 11px/11px var(--sans); color: #777; }

/* sheet */
.sheet-wrap { flex: 1; min-height: 0; display: grid; grid-template: 1fr 16px / 1fr 17px; background: #b1b1b1; }
.sheet { position: relative; overflow: hidden; min-height: 0; }
.sheet table { width: 100%; border-collapse: separate; border-spacing: 0; table-layout: fixed; }
.c-num { width: 20px; }
.c-end { width: 4px; }
.sheet th, .sheet td { padding: 0; border: solid #868686; border-width: 0 1px 1px 0; text-align: center; line-height: 14px; height: 23px; white-space: nowrap; }
.sheet th { font-size: 10px; font-weight: bold; }
.sheet thead th { height: 15px; }
.sheet thead svg { margin: auto; }
.sheet tbody tr:nth-child(4n+1) > * { height: 22px; }
.sheet tr > :last-child { border-right: 0; }
.sheet tbody td:nth-child(10) { border-right: 1px dashed #222; }
.sheet .hl { background: #80a3aa; }
.sheet td.sel { background: #a1a6ae; color: #555; font: 14px/18px var(--sans); border-color: #556; padding: 0 0 1px 2px; }
.ds { position: relative; }
.ds::before { content: "↓"; position: absolute; left: 1px; top: -3px; font: 10px/14px var(--sans); color: #667; }
.range { position: absolute; left: 19px; top: 14px; width: calc((100% - 24px) / 3 + 2px); height: 47px; border: 2px solid #1c56a8; }
.range::after { content: ""; position: absolute; right: -3px; bottom: -3px; width: 5px; height: 5px; background: #1c56a8; }
.pencil { position: absolute; left: calc(50% - 8px); top: 87px; }
.sheet-v { background: #b1b1b1; display: flex; flex-direction: column; align-items: center; padding: 3px 0; gap: 3px; }
.sheet-v i { width: 15px; background: #9d9d9d; flex: 1; margin-bottom: 22px; }
.sheet-h { display: flex; align-items: center; padding: 0 3px; gap: 4px; grid-column: 1 / 3; }
.sheet-h i { height: 15px; background: #9d9d9d; flex: 1; margin-right: 76px; }

/* right side */
.strip { width: 40px; flex: none; background: #e8e8ea; display: flex; flex-direction: column; align-items: center; }
.strip button { width: 32px; height: 32px; display: grid; place-items: center; }
.strip button:first-child { height: 26px; }
.strip .red2 { height: 33px; border: 3px solid var(--red); box-shadow: 1px 4px 5px rgba(0, 0, 0, .4); margin-left: 4px; }
.right { width: 300px; flex: none; display: flex; flex-direction: column; }
.title { height: 27px; flex: none; display: flex; justify-content: space-between; align-items: center; padding: 1px 5px 0 9px; border-bottom: 1px solid var(--line); }
.prop-bar { height: 26px; margin: 0 10px; padding-left: 2px; }
.widgets { height: 172px; padding: 3px 0 0; }
.widgets li { padding-left: 35px; }
.widgets li svg { margin-right: 4px; color: #333; }
.widgets .root { padding-left: 15px; }
.widgets .vscroll i { height: 96px; margin-top: 4px; }
.prop-tabs { margin-top: 11px; grid-template-columns: 1fr 1fr 1fr; }
.prop-tabs button { text-align: left; }
.prop-tabs button:not(.last) { padding-top: 4px; }
.prop-tabs .last { justify-content: flex-start; padding-left: 10px; }
.props { padding: 10px 12px 0 10px; }
.props h3 { margin: 0; height: 20px; padding: 0 5px 1px 4px; background: #ececee; font: inherit; display: flex; align-items: center; justify-content: space-between; }
.props h3 svg { color: #a5a6a9; margin-top: 5px; }
.row { display: flex; justify-content: space-between; padding-left: 4px; position: relative; }
.txt { height: 20px; border: 1px solid var(--line); background: #fff; font: 12px var(--sans); padding: 0 3px; }
.name { margin: 10px 0; line-height: 21px; }
.name .txt { width: 182px; }
.check { display: flex; align-items: center; gap: 4px; height: 15px; margin: 0 0 10px 5px; }
.check input { appearance: none; width: 13px; height: 13px; background: #3394f5; display: grid; place-items: center; }
.check input::before { content: ""; width: 5px; height: 9px; margin-top: -3px; border: solid #fff; border-width: 0 2px 2px 0; transform: rotate(40deg); }
.value { margin: 10px 0; line-height: 18px; }
.stack { width: 150px; position: relative; }
.stack .txt { display: block; width: 100%; margin-top: 5px; padding: 0 2px; }
.seg { width: 150px; height: 22px; display: grid; grid-template-columns: 1fr 1fr 1fr; border: 1px solid var(--line); background: #fff; }
.seg button { display: grid; place-items: center; white-space: nowrap; }
.seg .on { background: var(--blue); }
.tall { height: 40px; border-bottom: 0; }
.tall button { padding-top: 4px; }
.red3 { left: -16px; top: 40px; width: 178px; height: 37px; }
.b3 { left: 42px; top: 30px; }
.pos { line-height: 26px; margin-top: 10px; }
.font { line-height: 20px; margin-top: 6px; }
.pick { display: flex; align-items: center; position: relative; height: 20px; border: 1px solid var(--line); background: linear-gradient(90deg, #fff calc(100% - 19px), var(--tab) 0); }
.pick select { appearance: none; flex: 1; border: 0; background: none; padding: 0 0 0 5px; }
.pick svg { position: absolute; right: 4px; pointer-events: none; }
.cjk select { font: 12px "Noto Sans CJK SC", sans-serif; }
.pair { display: flex; gap: 6px; margin: 10px 0 6px; }
.style { width: 90px; }
.size { flex: 1; }
.size select { padding-left: 3px; }
.fmt { display: flex; gap: 1px; }
.fmt button { width: 20px; height: 20px; background: #fff; border: 1px solid var(--line); font: bold 13px/17px var(--sans); color: #333; }
.fmt .color { width: 22px; line-height: 12px; padding-bottom: 5px; box-shadow: inset 0 0 0 2px #fff, inset 0 -5px #000; }
.fmt .thin { font-weight: normal; }
.fmt .shade { text-shadow: 1px 1px 1px #999; }
.fmt .serif { font: 15px/17px "Liberation Serif", serif; }
.fmt .gap { margin-left: 10px; }
.fmt sup, .fmt sub { font-size: 8px; line-height: 0; font-weight: bold; }
.props .coords { height: 24px; margin-top: 17px; }
.props .coords svg { margin-top: 0; }
.num { margin-top: 10px; height: 40px; line-height: 25px; }
.spins { display: flex; gap: 5px; }
.spins label { width: 70px; display: flex; flex-direction: column; text-align: center; }
.spin { display: flex; height: 20px; border: 1px solid var(--line); background: #fff; }
.spin input { flex: 1; width: 0; border: 0; background: none; font: 12px var(--sans); padding: 0 4px; }
.arrows { width: 13px; background: #e0e1e3; display: flex; flex-direction: column; align-items: center; justify-content: space-between; }
```

FILE: sheet.js
```javascript
const body = document.getElementById('rows');
for (let n = 3; n <= 29; n++) {
  const row = body.insertRow();
  const head = document.createElement('th');
  head.textContent = n;
  row.append(head);
  for (let c = 0; c < 10; c++) row.insertCell();
}
```
